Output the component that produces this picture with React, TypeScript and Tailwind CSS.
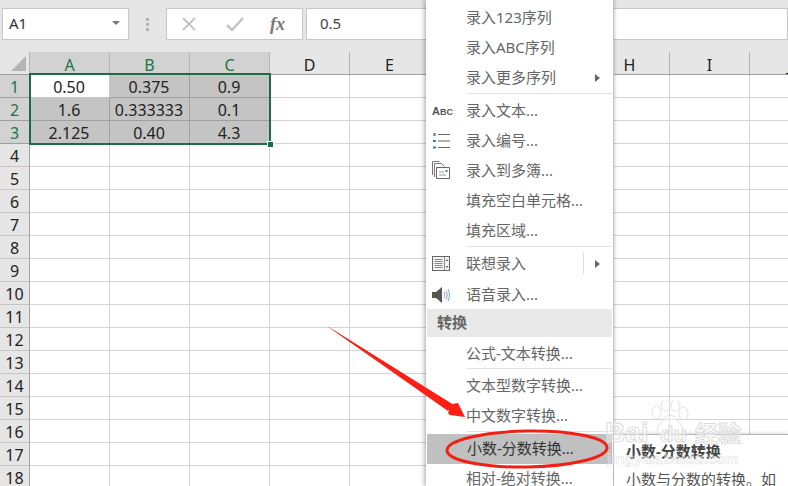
const cols = ["A", "B", "C", "D", "E", "F", "G", "H", "I", "J"];
const rows = Array.from({ length: 18 }, (_, i) => i + 1);
const data: Record<number, string[]> = {
  1: ["0.50", "0.375", "0.9"],
  2: ["1.6", "0.333333", "0.1"],
  3: ["2.125", "0.40", "4.3"],
};

function MenuItem({ label, icon, arrow, split, h = "h-[30px]", active }: { label: string; icon?: React.ReactNode; arrow?: boolean; split?: boolean; h?: string; active?: boolean }) {
  return (
    <div className={`relative flex items-center pl-[40px] pb-[1px] text-[15px] ${h} ${active ? "bg-[#c0c0c0] text-[#333] mx-px pl-[39px]" : "text-[#666]"}`}>
      {icon && <span className="absolute left-[6px] top-1/2 -translate-y-1/2 flex items-center">{icon}</span>}
      <span className="whitespace-nowrap">{label}</span>
      {split && <span className="absolute right-[29px] top-[4px] bottom-[5px] w-px bg-[#ddd]" />}
      {arrow && <span className="absolute right-[13px] top-1/2 -translate-y-1/2 w-0 h-0 border-y-[4px] border-y-transparent border-l-[5px] border-l-[#666]" />}
    </div>
  );
}

function Sep() {
  return (
    <div className="h-[3px] pl-[41px] pr-[1px]">
      <div className="h-px bg-[#e1e1e1]" />
    </div>
  );
}

function ListIcon() {
  return (
    <svg width="18" height="18" viewBox="0 0 18 18">
      <path d="M6 2.500h12M6 9h12M6 15.500h12" stroke="#666" strokeWidth="1" fill="none" />
      <path d="M1.500 1h2v3h-2zM1 8h3v2h-3zM1 14.500h3v2h-3z" fill="#4a78b0" />
    </svg>
  );
}

function PagesIcon() {
  return (
    <svg width="18" height="20" viewBox="0 0 18 20" fill="none">
      <path d="M.5 14V.5h7M2.500 16V2.500h7l3 3" stroke="#777" />
      <path d="M4.500 17.500V6.500h13v11z" stroke="#666" fill="#fff" />
      <path d="M7 11h5M7 14h7" stroke="#999" />
      <rect x="13.500" y="9" width="2" height="2" fill="#3f7fc0" />
    </svg>
  );
}

function BookIcon() {
  return (
    <svg width="18" height="16" viewBox="0 0 18 16" fill="none">
      <rect x=".5" y=".5" width="17" height="14" stroke="#666" fill="#f4f4f4" />
      <path d="M12.500 .5v14M2.500 3.500h8M2.500 5.500h8M2.500 7.500h8M2.500 9.500h8M2.500 11.500h8" stroke="#888" />
      <path d="M15 3l1.500 2h-3zM15 12l1.500-2h-3z" fill="#666" />
    </svg>
  );
}

function SpeakerIcon() {
  return (
    <svg width="18" height="16" viewBox="0 0 18 16" fill="none">
      <path d="M0 5h4l6-5v16l-6-5H0z" fill="#555" />
      <path d="M12 5c1 2 1 4 0 6M14 3.500c1.500 3 1.500 6 0 9M16 2c2 4 2 8 0 12" stroke="#7fa8cc" strokeWidth="1" />
    </svg>
  );
}

export default function App() {
  return (
    <div className="relative w-[788px] h-[486px] overflow-hidden bg-white font-['Noto_Sans','Noto_Sans_CJK_SC',sans-serif]">
      {/* formula bar */}
      <div className="h-[52px] bg-[#e6e6e6] flex items-start pt-[8px] pl-[2px]">
        <div className="w-[127px] h-[32px] bg-white border border-[#c6c6c6] flex items-center justify-between pl-[6px] pr-[8px] pb-[2px] text-[15px] text-[#333]">
          <span>A1</span>
          <span className="w-0 h-0 border-x-[4px] border-x-transparent border-t-[4px] border-t-[#777]" />
        </div>
        <div className="w-[37px] h-[32px] flex flex-col items-center justify-center gap-[2px]">
          <span className="w-[3px] h-[3px] bg-[#b5b5b5]" />
          <span className="w-[3px] h-[3px] bg-[#b5b5b5]" />
          <span className="w-[3px] h-[3px] bg-[#b5b5b5]" />
        </div>
        <div className="w-[137px] h-[32px] bg-white border border-[#c6c6c6] flex items-center">
          <svg width="16" height="16" viewBox="0 0 16 16" className="ml-[14px]">
            <path d="M2 2l12 12M14 2L2 14" stroke="#c4c4c4" strokeWidth="2" />
          </svg>
          <svg width="18" height="16" viewBox="0 0 18 16" className="ml-[29px]">
            <path d="M1 9l5 5L17 2" stroke="#c4c4c4" strokeWidth="2.500" fill="none" />
          </svg>
          <span className="ml-[26px] font-['Liberation_Serif',serif] italic font-bold text-[18px] leading-none text-[#777]">fx</span>
        </div>
        <div className="ml-[3px] flex-1 h-[32px] bg-white border border-[#c6c6c6] flex items-center pl-[13px] pb-[2px] text-[15px] text-[#444]">0.5</div>
      </div>

      {/* column headers */}
      <div className="flex h-[23px] bg-[#e6e6e6] border-b border-[#9f9f9f]">
        <div className="relative w-[30px] shrink-0 border-r border-[#b5b5b5]">
          <span className="absolute right-[3px] bottom-[3px] w-0 h-0 border-l-[15px] border-l-transparent border-b-[15px] border-b-[#b5b5b5]" />
        </div>
        {cols.map((c, i) => (
          <div key={c} className={`w-[80px] shrink-0 flex items-center justify-center border-r border-[#b5b5b5] text-[16px] pt-[3px] ${i < 3 ? "bg-[#d2d2d2] text-[#217346]" : "text-[#222]"}`}>
            {c}
          </div>
        ))}
      </div>

      {/* rows */}
      {rows.map((r) => (
        <div key={r} className="flex h-[23px]">
          <div className={`w-[30px] shrink-0 flex items-center justify-center pt-[1px] border-r border-b text-[16px] ${r < 4 ? "bg-[#d2d2d2] text-[#217346] border-[#9f9f9f]" : "bg-[#e6e6e6] text-[#222] border-[#c6c6c6] border-r-[#9f9f9f]"}`}>
            {r}
          </div>
          {cols.map((c, i) => {
            const val = data[r]?.[i];
            const sel = r < 4 && i < 3;
            const first = r === 1 && i === 0;
            return (
              <div key={c} className={`w-[80px] shrink-0 flex items-center justify-center pt-[1px] pr-[1px] border-r border-b text-[16px] text-[#222] ${first ? "bg-white border-[#c6c6c6]" : sel ? "bg-[#c4c4c4] border-[#9f9f9f]" : "border-[#d4d4d4]"}`}>
                {val}
              </div>
            );
          })}
        </div>
      ))}

      {/* selection outline */}
      <div className="absolute left-[29px] top-[73px] w-[242px] h-[72px] border-2 border-[#1e6b45] pointer-events-none" />
      <div className="absolute left-[267px] top-[141px] w-[5px] h-[5px] bg-[#1e6b45] border border-white box-content" />

      {/* context menu */}
      <div className="absolute left-[426px] top-0 w-[188px] h-[486px] bg-white border-r border-[#c6c6c6] shadow-[-2px_0_4px_rgba(0,0,0,0.25),1px_0_3px_rgba(0,0,0,0.15)] pt-[3px]">
        <MenuItem label="录入123序列" />
        <MenuItem label="录入ABC序列" />
        <MenuItem label="录入更多序列" arrow />
        <Sep />
        <MenuItem label="录入文本..." icon={<span className="font-['Liberation_Sans',sans-serif] text-[11px] leading-none text-[#555] font-bold">A<span className="text-[9px]">BC</span></span>} />
        <MenuItem label="录入编号..." icon={<ListIcon />} />
        <MenuItem label="录入到多簿..." icon={<PagesIcon />} />
        <MenuItem label="填充空白单元格..." />
        <MenuItem label="填充区域..." />
        <Sep />
        <MenuItem label="联想录入" icon={<BookIcon />} arrow split />
        <MenuItem label="语音录入..." icon={<SpeakerIcon />} h="h-[30px] mt-px" />
        <div className="h-[28px] -mt-px mx-px pb-[1px] bg-[#e9e9e9] flex items-center pl-[10px] text-[15px] font-bold text-[#666]">转换</div>
        <MenuItem label="公式-文本转换..." h="h-[29px] mt-[2px]" />
        <Sep />
        <MenuItem label="文本型数字转换..." />
        <MenuItem label="中文数字转换..." />
        <Sep />
        <MenuItem label="小数-分数转换..." active />
        <MenuItem label="相对-绝对转换..." />
      </div>

      {/* tooltip */}
      <div className="absolute left-[614px] top-[434px] w-[174px] h-[52px] bg-white border-t border-[#b5b5b5] pl-[12px] pt-[6px] text-[15px] text-[#555] shadow-[0_-1px_3px_rgba(0,0,0,0.15)]">
        <div className="font-bold text-[#444] h-[20px] leading-[20px]">小数-分数转换</div>
        <div className="mt-[8px] whitespace-nowrap leading-[20px]">小数与分数的转换。如</div>
      </div>

      {/* annotation arrow and ellipse */}
      <svg className="absolute left-0 top-0 pointer-events-none" width="788" height="486" viewBox="0 0 788 486" fill="none">
        <path d="M327 326L452 404l6-1 7 14-15-2 -2-2 1-3z" fill="#fb1f14" />
        <path d="M327 326L452 404 448 411z" fill="#fb1f14" />
        <ellipse cx="527" cy="449" rx="80" ry="18" stroke="#f02014" strokeWidth="3" transform="rotate(-1 527 449)" />
      </svg>

      {/* watermark */}
      <svg width="40" height="36" viewBox="6 4 42 40" className="absolute left-[650px] top-[400px] pointer-events-none" fill="#fff" fillOpacity=".4" stroke="#dcdcdc">
        <ellipse cx="12" cy="18" rx="5" ry="7" />
        <ellipse cx="22" cy="10" rx="5" ry="6.500" />
        <ellipse cx="33" cy="10" rx="5" ry="6.500" />
        <ellipse cx="42" cy="19" rx="5" ry="7" />
        <path d="M27 21c-6 0-7 5-11 9s-5 14 4 13c4-1 10-1 14 0 9 1 8-9 4-13s-5-9-11-9z" />
      </svg>
      <span className="absolute left-[605px] top-[419px] whitespace-nowrap font-['Liberation_Sans',sans-serif] font-bold text-[28px] leading-none text-white/40 [-webkit-text-stroke:1px_#dcdcdc]">Bai</span>
      <span className="absolute left-[660px] top-[424px] whitespace-nowrap font-['Liberation_Sans',sans-serif] font-bold text-[22px] leading-none text-white/40 [-webkit-text-stroke:1px_#dcdcdc]">du</span>
      <span className="absolute left-[695px] top-[422px] whitespace-nowrap text-[23px] leading-none font-bold text-white/40 [-webkit-text-stroke:1px_#dcdcdc]">经验</span>
      <span className="absolute left-[607px] top-[451px] whitespace-nowrap font-['Liberation_Sans',sans-serif] text-[15px] leading-none font-bold text-white/30 [-webkit-text-stroke:0.5px_#dcdcdc]">jingyan.baidu.com</span>
    </div>
  );
}
